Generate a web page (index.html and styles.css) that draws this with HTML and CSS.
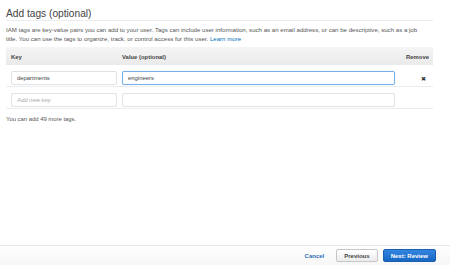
FILE: index.html
```html
<!DOCTYPE html>
<html lang="en">
<head>
    <meta charset="UTF-8">
    <meta name="viewport" content="width=device-width, initial-scale=1.0">
    <title>Add tags</title>
    <link rel="stylesheet" href="styles.css">
</head>
<body>
    <div class="page">
        <div class="content">
            <h2 class="title">Add tags (optional)</h2>
            <p class="desc">
                IAM tags are key-value pairs you can add to your user. Tags can include user information, such as an email address, or can be descriptive, such as a job<br>
                title. You can use the tags to organize, track, or control access for this user. <a href="#">Learn more</a>
            </p>

            <div class="tags">
                <div class="tags-row tags-head">
                    <div class="cell">Key</div>
                    <div class="cell">Value (optional)</div>
                    <div class="cell remove">Remove</div>
                </div>
                <div class="tags-row">
                    <div class="cell"><input type="text" class="field" value="departments"></div>
                    <div class="cell"><input type="text" class="field focused" value="engineers"></div>
                    <div class="cell remove"><span class="x">&#x2716;</span></div>
                </div>
                <div class="tags-row">
                    <div class="cell"><input type="text" class="field" placeholder="Add new key"></div>
                    <div class="cell"><input type="text" class="field"></div>
                    <div class="cell remove"></div>
                </div>
            </div>

            <p class="note">You can add 49 more tags.</p>
        </div>

        <div class="footer">
            <a href="#" class="cancel">Cancel</a>
            <button class="btn">Previous</button>
            <button class="btn primary">Next: Review</button>
        </div>
    </div>
</body>
</html>
```

FILE: styles.css
```css
body {
    margin: 0;
    font-family: "Liberation Sans", Arial, sans-serif;
    color: #444;
    background: #fff;
}
.page {
    height: 265px;
    display: flex;
    flex-direction: column;
}
.content {
    padding: 0 17px 0 6px;
}
.title {
    margin: 7px 0 0;
    font-size: 10.2px;
    font-weight: normal;
    line-height: 13px;
    color: #444;
    border-bottom: 1px solid #eaeded;
}
.desc {
    margin: 4px 0 0;
    font-size: 6.1px;
    line-height: 9px;
    color: #555;
    white-space: nowrap;
}
.desc a {
    color: #0073bb;
    text-decoration: none;
}
.tags {
    margin-top: 4px;
}
.tags-row {
    display: grid;
    grid-template-columns: 111px 1fr 38px;
    align-items: center;
    border-bottom: 1px solid #eaeded;
    height: 21px;
}
.tags-head {
    height: 18px;
    background: linear-gradient(#f5f5f5, #eaeaea);
    border-bottom: none;
    font-size: 5.9px;
    font-weight: bold;
    color: #444;
}
.tags-head .cell {
    padding-top: 1px;
}
.cell {
    padding-left: 5px;
}
.cell.remove {
    padding-left: 0;
    padding-right: 4px;
    text-align: right;
}
.field {
    box-sizing: border-box;
    width: 100%;
    height: 14px;
    margin: 0;
    padding: 0 5px;
    font-family: inherit;
    font-size: 5.9px;
    color: #444;
    border: 1px solid #dfe3e3;
    border-radius: 2px;
    outline: none;
}
.field::placeholder {
    color: #aaa;
    font-style: italic;
}
.field.focused {
    border-color: #7aaee6;
    box-shadow: 0 0 1px #a9cdf2;
}
.x {
    display: inline-block;
    margin-right: 3px;
    font-size: 6px;
    color: #333;
}
.note {
    margin: 7px 0 0;
    font-size: 5.9px;
    color: #555;
}
.footer {
    margin-top: auto;
    height: 19px;
    border-top: 1px solid #e6e6e6;
    background: linear-gradient(#fff, #f6f6f6);
    display: flex;
    justify-content: flex-end;
    align-items: center;
    padding-right: 14px;
}
.cancel {
    font-size: 6px;
    font-weight: bold;
    color: #2e6fbd;
    text-decoration: none;
    margin-right: 7px;
}
.btn {
    height: 13px;
    padding: 0 7px;
    margin-left: 5px;
    font-family: inherit;
    font-size: 6px;
    font-weight: bold;
    color: #444;
    border: 1px solid #c6c6c6;
    border-radius: 2px;
    background: linear-gradient(#fff, #ececec);
    cursor: pointer;
}
.btn.primary {
    padding: 0 7px;
    color: #fff;
    border-color: #1a5fb0;
    background: linear-gradient(#3386df, #1767c4);
}
```
